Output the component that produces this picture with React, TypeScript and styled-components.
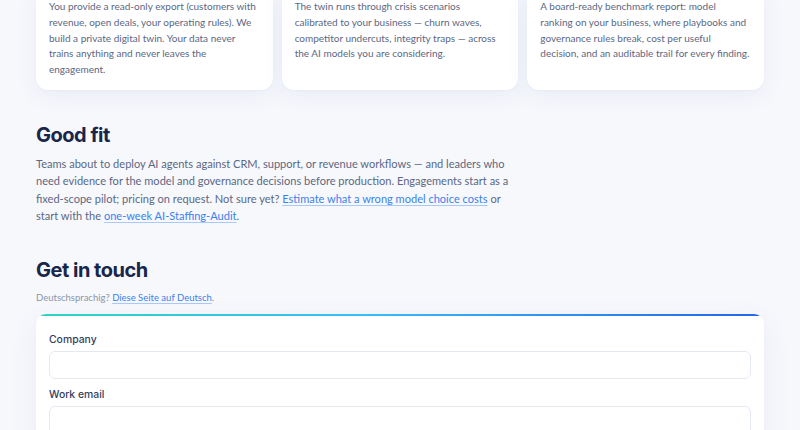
import React from "react";
import styled, { createGlobalStyle } from "styled-components";

const Global = createGlobalStyle`
  html, body { margin: 0; padding: 0; }
  body {
    background: #f7f8fc;
    font-family: Lato, "Noto Sans", "Liberation Sans", sans-serif;
    -webkit-font-smoothing: antialiased;
    overflow: hidden;
  }
`;

const Page = styled.main`
  width: 728px;
  margin: -16px auto 0;
  padding-bottom: 40px;
`;

const CardGrid = styled.section`
  display: grid;
  grid-template-columns: repeat(3, 1fr);
  gap: 9px;
`;

const Card = styled.article`
  background: #ffffff;
  border-radius: 12px;
  padding: 15px 14px 12px 13px;
  box-shadow: 0 6px 22px rgba(60, 90, 170, 0.07), 0 1px 2px rgba(60, 90, 170, 0.04);
`;

const CardText = styled.p`
  margin: 0;
  font-size: 10px;
  line-height: 15.75px;
  color: #5b6784;
`;

const Section = styled.section`
  margin-top: 33px;
`;

const Heading = styled.h2`
  margin: 0;
  font-family: Inter, "Noto Sans", sans-serif;
  font-size: 20px;
  line-height: 24px;
  font-weight: 700;
  letter-spacing: -0.5px;
  color: #18264b;
`;

const Lead = styled.p`
  margin: 8px 0 0;
  max-width: 480px;
  font-size: 11.05px;
  line-height: 17.5px;
  color: #5b6784;
`;

const Link = styled.a`
  color: #3b7ff0;
  text-decoration: underline;
  text-decoration-color: #a9c8fb;
  text-underline-offset: 2px;
`;

const Note = styled.p`
  margin: 9px 0 0;
  font-size: 9.5px;
  line-height: 14px;
  color: #8b95a8;
`;

const FormCard = styled.form`
  position: relative;
  margin-top: 9px;
  background: #ffffff;
  border-radius: 10px;
  padding: 18px 13px 20px;
  overflow: hidden;
  display: flex;
  flex-direction: column;
  gap: 8px;
  box-shadow: 0 8px 28px rgba(60, 90, 170, 0.08), 0 1px 2px rgba(60, 90, 170, 0.04);

  &::before {
    content: "";
    position: absolute;
    left: 0;
    right: 0;
    top: 0;
    height: 2px;
    background: linear-gradient(90deg, #2dd4bf 0%, #38bdf8 45%, #2563eb 100%);
  }
`;

const Field = styled.label`
  display: flex;
  flex-direction: column;
  gap: 4px;
`;

const FieldLabel = styled.span`
  font-family: Inter, "Noto Sans", sans-serif;
  font-size: 10.4px;
  line-height: 15px;
  font-weight: 500;
  color: #33405c;
`;

const Input = styled.input`
  box-sizing: border-box;
  height: 28px;
  width: 100%;
  border: 1px solid #e3e8f1;
  border-radius: 6px;
  background: #ffffff;
  font: inherit;
  font-size: 11px;
  padding: 0 10px;
  outline: none;
`;

const cards = [
  "You provide a read-only export (customers with revenue, open deals, your operating rules). We build a private digital twin. Your data never trains anything and never leaves the engagement.",
  "The twin runs through crisis scenarios calibrated to your business — churn waves, competitor undercuts, integrity traps — across the AI models you are considering.",
  "A board-ready benchmark report: model ranking on your business, where playbooks and governance rules break, cost per useful decision, and an auditable trail for every finding.",
];

export default function App() {
  return (
    <>
      <Global />
      <Page>
        <CardGrid>
          {cards.map((t) => (
            <Card key={t}>
              <CardText>{t}</CardText>
            </Card>
          ))}
        </CardGrid>

        <Section>
          <Heading>Good fit</Heading>
          <Lead>
            Teams about to deploy AI agents against CRM, support, or revenue workflows — and leaders who
            need evidence for the model and governance decisions before production. Engagements start as a
            fixed-scope pilot; pricing on request. Not sure yet?{" "}
            <Link href="#">Estimate what a wrong model choice costs</Link> or start with the{" "}
            <Link href="#">one-week AI-Staffing-Audit</Link>.
          </Lead>
        </Section>

        <Section>
          <Heading>Get in touch</Heading>
          <Note>
            Deutschsprachig? <Link href="#">Diese Seite auf Deutsch</Link>.
          </Note>
          <FormCard onSubmit={(e) => e.preventDefault()}>
            <Field>
              <FieldLabel>Company</FieldLabel>
              <Input type="text" />
            </Field>
            <Field>
              <FieldLabel>Work email</FieldLabel>
              <Input type="email" />
            </Field>
          </FormCard>
        </Section>
      </Page>
    </>
  );
}
